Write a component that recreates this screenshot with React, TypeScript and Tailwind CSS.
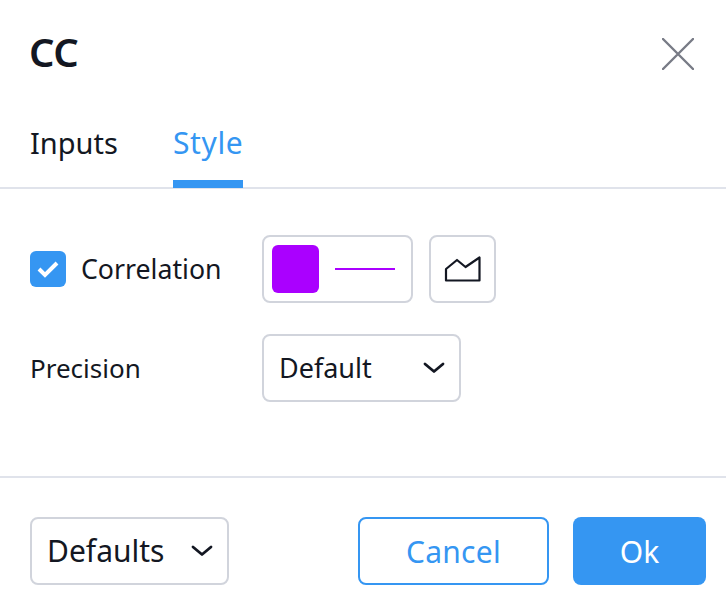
import React from 'react';

const font = { fontFamily: '"Noto Sans", sans-serif' };

const Chevron = () => (
  <svg width="22" height="12" viewBox="0 0 22 12" fill="none" stroke="#131722" strokeWidth="2.8" strokeLinecap="round" strokeLinejoin="round">
    <path d="M2 2 L11 9.5 L20 2" />
  </svg>
);

const App: React.FC = () => {
  return (
    <div className="w-[726px] h-[608px] bg-white text-[#131722] flex flex-col overflow-hidden" style={font}>
      {/* title */}
      <div className="h-[109px] pl-[29px] pr-[32px] flex items-start justify-between">
        <h1 className="mt-[27px] text-[40px] leading-[50px] font-semibold tracking-[-0.5px]">CC</h1>
        <button className="mt-[38px]">
          <svg width="32" height="32" viewBox="0 0 32 32" fill="none" stroke="#787b86" strokeWidth="2.4" strokeLinecap="round">
            <path d="M1 1 L31 31 M31 1 L1 31" />
          </svg>
        </button>
      </div>

      {/* tabs */}
      <div className="h-[80px] pl-[30px] flex border-b-2 border-[#e0e3eb]">
        <div className="w-[143px] h-[79px] text-[29px] leading-[67px]">Inputs</div>
        <div className="h-[79px] text-[30px] leading-[67px] tracking-[0.6px] text-[#3596f2] border-b-8 border-[#3596f2]">Style</div>
      </div>

      {/* body */}
      <div className="h-[289px] pl-[30px] pt-[46px] border-b-2 border-[#e0e3eb] flex flex-col gap-[31px]">
        <div className="flex items-center h-[68px]">
          <div className="w-[232px] flex items-center gap-[16px]">
            <span className="w-[36px] h-[36px] rounded-[6px] bg-[#3596f2] flex items-center justify-center">
              <svg width="22" height="18" viewBox="0 0 22 18" fill="none" stroke="white" strokeWidth="4">
                <path d="M2 9 L8 15 L20 3" />
              </svg>
            </span>
            <span className="text-[26.7px] leading-[36px] -ml-[1px] -mt-[1px]">Correlation</span>
          </div>
          <button className="w-[151px] h-[68px] rounded-[8px] border-2 border-[#d1d4dc] flex items-center pl-[8px] gap-[16px]">
            <span className="w-[47px] h-[48px] rounded-[6px] bg-[#aa00ff]"></span>
            <span className="w-[60px] h-[2px] bg-[#aa00ff]"></span>
          </button>
          <button className="ml-[16px] w-[67px] h-[68px] rounded-[8px] border-2 border-[#d1d4dc] flex items-center justify-center">
            <svg width="38" height="26" viewBox="0 0 38 26" fill="none" stroke="#131722" strokeWidth="2.2" strokeLinejoin="round">
              <path d="M2 13 L13 4 L21.5 11 L35.5 1.5 V24.5 H2 Z" />
            </svg>
          </button>
        </div>
        <div className="flex items-center h-[68px]">
          <span className="w-[232px] text-[26px] leading-[36px]">Precision</span>
          <button className="w-[199px] h-[68px] rounded-[8px] border-2 border-[#d1d4dc] flex items-center justify-between pl-[15px] pr-[14px]">
            <span className="text-[27px] leading-[36px]">Default</span>
            <Chevron />
          </button>
        </div>
      </div>

      {/* footer */}
      <div className="flex-1 pl-[30px] pr-[20px] pt-[39px] flex items-start">
        <button className="w-[199px] h-[68px] rounded-[8px] border-2 border-[#d1d4dc] flex items-center justify-between pl-[15px] pr-[14px]">
          <span className="text-[30px] leading-[40px]">Defaults</span>
          <Chevron />
        </button>
        <button className="ml-auto w-[191px] h-[68px] rounded-[8px] border-2 border-[#3596f2] text-[30px] tracking-[0.3px] text-[#3596f2]">Cancel</button>
        <button className="ml-[24px] w-[133px] h-[68px] rounded-[8px] bg-[#3596f2] text-[30px] text-white">Ok</button>
      </div>
    </div>
  );
};

export default App;
